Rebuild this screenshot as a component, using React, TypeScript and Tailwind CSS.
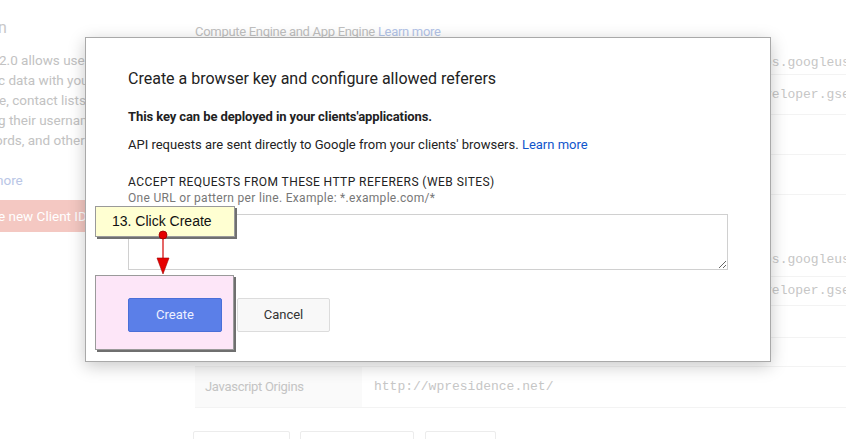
import React from "react";

const mono = { fontFamily: '"Liberation Mono", "DejaVu Sans Mono", monospace' };

function Row({ h, value, label, labelBg }: { h: number; value?: string; label?: string; labelBg?: boolean }) {
  return (
    <div className="flex border-b border-[#f3f3f3]" style={{ height: h }}>
      <div className={`w-[167px] shrink-0 flex items-center pl-[10px] text-[13px] text-[#c4c4c4] tracking-[-0.3px] ${labelBg ? "bg-[#fafafa]" : ""}`}>
        {label}
      </div>
      <div className="flex items-center pl-[12px] text-[13px] text-[#c6c6c6] whitespace-nowrap" style={mono}>
        {value}
      </div>
    </div>
  );
}

export default function App() {
  return (
    <div
      className="relative w-[846px] h-[439px] overflow-hidden bg-white"
      style={{ fontFamily: 'Roboto, "Liberation Sans", Arial, sans-serif' }}
    >
      {/* faded page behind */}
      <div className="flex">
        {/* left sidebar */}
        <div className="w-[195px] shrink-0 whitespace-nowrap text-[13.5px] leading-[20px] text-[#c2c2c2]">
          <div className="h-[18px]" />
          <div className="text-[16px] leading-[20px] text-[#c8c8c8] -ml-[2px]">n</div>
          <div className="h-[12px]" />
          <div className="-ml-[1px]">2.0 allows users</div>
          <div className="-ml-[2px]">c data with you</div>
          <div className="-ml-[1px]">e, contact lists</div>
          <div className="-ml-[2px]">g their usernam</div>
          <div className="-ml-[5px]">ords, and other</div>
          <div className="h-[20px]" />
          <div className="-ml-[4px] text-[#b9c6e6]">nore</div>
          <div className="h-[10px]" />
          <div className="h-[32px] w-[110px] bg-[#f4c8c2] text-white flex items-center text-[13.5px] -ml-[2px]">
            e new Client ID
          </div>
        </div>

        {/* main column */}
        <div className="flex-1 min-w-0">
          <div className="h-[22px]" />
          <div className="text-[13px] leading-[20px] text-[#c0c0c0] tracking-[-0.3px] whitespace-nowrap">
            Compute Engine and App Engine <span className="text-[#b3c4e8]">Learn more</span>
          </div>
          <div className="h-[10px]" />
          <Row h={23} value="123456789012-a1b2c3d4e5f6g7h8i9j0k1l2m3n4o5p6qr.apps.googleusercontent.com" />
          <Row h={40} value="123456789012-a1b2c3d4e5f6g7h8i9j0k1l2m3n4o5p6qr@developer.gserviceaccount.com" />
          <Row h={40} />
          <Row h={40} />
          <div className="h-[48px]" />
          <Row h={34} value="123456789012-a1b2c3d4e5f6g7h8i9j0k1l2m3n4o5p6qr.apps.googleusercontent.com" />
          <Row h={29} value="123456789012-a1b2c3d4e5f6g7h8i9j0k1l2m3n4o5p6qr@developer.gserviceaccount.com" />
          <Row h={32} />
          <Row h={29} />
          <Row h={41} label="Javascript Origins" labelBg value="http://wpresidence.net/" />
          <div className="h-[23px]" />
          <div className="flex gap-[10px] -ml-[2px]">
            <div className="w-[97px] h-[20px] border border-[#ececec] rounded-t-[2px]" />
            <div className="w-[114px] h-[20px] border border-[#ececec] rounded-t-[2px]" />
            <div className="w-[71px] h-[20px] border border-[#ececec] rounded-t-[2px] ml-[1px]" />
          </div>
        </div>
      </div>

      {/* modal */}
      <div className="absolute left-[85px] top-[37px] w-[686px] h-[325px] bg-white border border-[#a9a9a9] shadow-[0_4px_16px_rgba(0,0,0,0.22)]">
        <div className="pl-[42px] pt-[29px] text-[#222]">
          <div className="text-[16px] leading-[24px] text-[#222]">
            Create a browser key and configure allowed referers
          </div>
          <div className="mt-[17px] text-[13px] leading-[18px] font-bold text-[#222] tracking-[-0.1px]">
            This key can be deployed in your clients'applications.
          </div>
          <div className="mt-[10px] text-[13px] leading-[18px] text-[#222]">
            API requests are sent directly to Google from your clients' browsers.{" "}
            <span className="text-[#1155cc]">Learn more</span>
          </div>
          <div className="mt-[20px] text-[12px] leading-[16px] text-[#222] tracking-[0.43px]">
            ACCEPT REQUESTS FROM THESE HTTP REFERERS (WEB SITES)
          </div>
          <div className="text-[12px] leading-[16px] text-[#777] tracking-[0.3px]">
            One URL or pattern per line. Example: *.example.com/*
          </div>
          <textarea
            className="mt-[8px] block w-[600px] h-[56px] border border-[#d0d0d0] bg-white outline-none"
            defaultValue=""
          />
          <div className="mt-[28px] flex gap-[15px]">
            <div className="relative z-10 w-[94px] h-[34px] rounded-[2px] bg-[#5b7fe8] border border-[#4a6fd8] flex items-center justify-center text-[13px] text-[#eef0ff]">
              Create
            </div>
            <div className="w-[93px] h-[34px] rounded-[2px] bg-[#f8f8f8] border border-[#dcdcdc] flex items-center justify-center text-[13px] text-[#333]">
              Cancel
            </div>
          </div>
        </div>
      </div>

      {/* highlight behind Create button */}
      <div className="absolute left-[95px] top-[275px] w-[139px] h-[75px] bg-[#fde6f8] border border-[#9a9a9a] shadow-[2px_2px_0_#6f6f6f]" />

      {/* callout */}
      <div
        className="absolute z-20 left-[95px] top-[206px] w-[140px] h-[31px] bg-[#ffffd2] border border-[#9a9a9a] shadow-[2px_2px_0_#707070] flex items-center pl-[16px] text-[14px] text-[#111]"
        style={{ fontFamily: '"Liberation Sans", Arial, sans-serif' }}
      >
        13. Click Create
      </div>

      {/* arrow */}
      <svg className="absolute z-20 left-[150px] top-[228px]" width="26" height="48" viewBox="0 0 26 48">
        <line x1="13" y1="7" x2="13" y2="34" stroke="#d40000" strokeWidth="1.2" />
        <polygon points="7,30 19,30 13,46" fill="#e60000" stroke="#a00000" strokeWidth="0.6" />
        <circle cx="13" cy="7" r="4" fill="#e40000" stroke="#9a0000" strokeWidth="0.8" />
      </svg>
    </div>
  );
}
